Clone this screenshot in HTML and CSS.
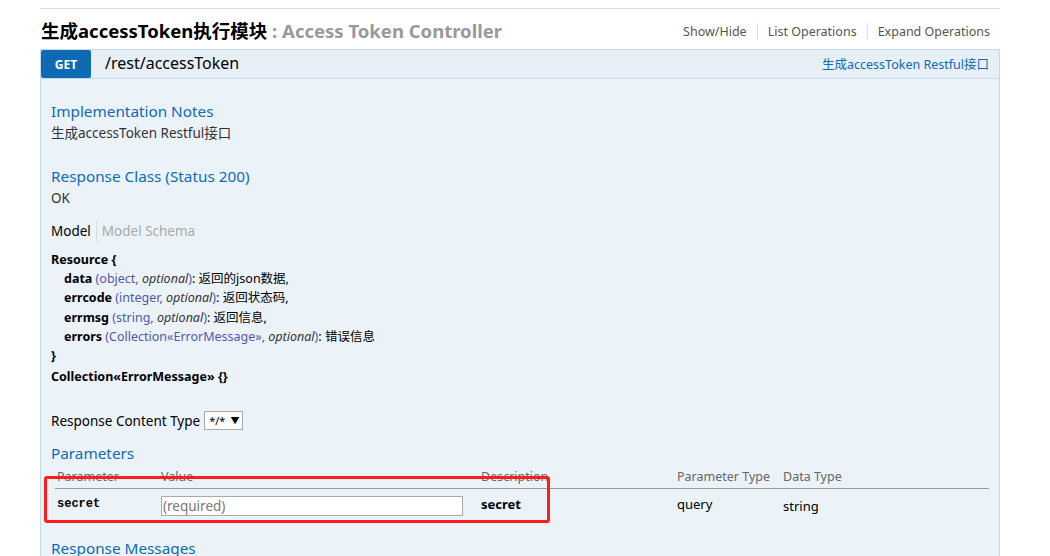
FILE: index.html
```html
<!DOCTYPE html>
<html lang="zh-CN">

<head>
    <meta charset="UTF-8">
    <meta name="viewport" content="width=device-width, initial-scale=1.0">
    <title>Access Token Controller</title>
    <link rel="stylesheet" href="styles.css">
</head>

<body>
    <div class="wrap">
        <div class="resource">
            <div class="heading">
                <h2><span class="title">生成accessToken执行模块</span> : Access Token Controller</h2>
                <ul class="options">
                    <li><a href="#">Show/Hide</a></li>
                    <li><a href="#">List Operations</a></li>
                    <li><a href="#">Expand Operations</a></li>
                </ul>
            </div>

            <div class="operation">
                <div class="op-heading">
                    <span class="method">GET</span>
                    <span class="path">/rest/accessToken</span>
                    <a class="summary" href="#">生成accessToken Restful接口</a>
                </div>

                <div class="op-content">
                    <h4>Implementation Notes</h4>
                    <p class="notes">生成accessToken Restful接口</p>

                    <h4>Response Class (Status 200)</h4>
                    <p class="notes">OK</p>

                    <ul class="signature-nav">
                        <li class="selected">Model</li>
                        <li>Model Schema</li>
                    </ul>

                    <div class="model">
                        <div class="strong">Resource {</div>
                        <div class="prop"><span class="name">data</span> <span class="type">(object, <i>optional</i>)</span>: 返回的json数据,</div>
                        <div class="prop"><span class="name">errcode</span> <span class="type">(integer, <i>optional</i>)</span>: 返回状态码,</div>
                        <div class="prop"><span class="name">errmsg</span> <span class="type">(string, <i>optional</i>)</span>: 返回信息,</div>
                        <div class="prop"><span class="name">errors</span> <span class="type">(Collection«ErrorMessage», <i>optional</i>)</span>: 错误信息</div>
                        <div class="strong">}</div>
                        <div class="strong collection">Collection«ErrorMessage» {}</div>
                    </div>

                    <div class="content-type">
                        <label>Response Content Type</label>
                        <span class="select">*/* <span class="arrow">▼</span></span>
                    </div>

                    <h4>Parameters</h4>
                    <div class="params">
                        <table>
                            <thead>
                                <tr>
                                    <th class="col-name">Parameter</th>
                                    <th class="col-value">Value</th>
                                    <th class="col-desc">Description</th>
                                    <th class="col-ptype">Parameter Type</th>
                                    <th>Data Type</th>
                                </tr>
                            </thead>
                            <tbody>
                                <tr>
                                    <td class="code">secret</td>
                                    <td><input class="param-input" type="text" placeholder="(required)"></td>
                                    <td class="strong">secret</td>
                                    <td>query</td>
                                    <td class="dtype">string</td>
                                </tr>
                            </tbody>
                        </table>
                        <div class="highlight"></div>
                    </div>

                    <h4 class="messages">Response Messages</h4>
                </div>
            </div>
        </div>
    </div>
</body>

</html>
```

FILE: styles.css
```css
/* Base */
* {
    box-sizing: border-box;
    margin: 0;
    padding: 0;
}

body {
    font-family: "Noto Sans", "Open Sans", "Noto Sans CJK SC", sans-serif;
    font-size: 13px;
    color: #333;
    background: #fff;
    overflow: hidden;
}

a {
    text-decoration: none;
}

ul {
    list-style: none;
}

.wrap {
    width: 960px;
    margin-left: 40px;
    padding-top: 8px;
}

/* Resource heading */
.heading {
    display: flex;
    align-items: center;
    justify-content: space-between;
    height: 41px;
    border-top: 1px solid #ddd;
    padding-top: 2px;
}

.heading h2 {
    font-size: 18.5px;
    font-weight: bold;
    color: #999;
    padding-left: 1px;
}

.heading h2 .title {
    color: #000;
}

.options {
    display: flex;
    padding-top: 2px;
    padding-right: 10px;
}

.options li {
    padding: 0 10px;
    border-right: 1px solid #ddd;
    line-height: 16px;
}

.options li:last-child {
    border-right: none;
    padding-right: 0;
}

.options a {
    color: #555;
    font-size: 12.5px;
}

/* Operation */
.op-heading {
    display: flex;
    align-items: center;
    height: 30px;
    background: #e7f0f7;
    border: 1px solid #c3d9ec;
}

.method {
    width: 50px;
    height: 28px;
    background: #0f6ab4;
    color: #fff;
    font-size: 12px;
    font-weight: bold;
    display: flex;
    align-items: center;
    justify-content: center;
    border-radius: 2px;
}

.path {
    font-size: 16px;
    color: #000;
    margin-left: 14px;
    margin-bottom: 2px;
    flex: 1;
}

.summary {
    color: #0f6ab4;
    font-size: 12.5px;
    padding-right: 10px;
    margin-bottom: 2px;
}

.op-content {
    background: #ebf3f9;
    border: 1px solid #c3d9ec;
    border-top: none;
    padding: 21px 10px 20px 10px;
    height: 480px;
}

.op-content h4 {
    color: #0f6ab4;
    font-size: 15.3px;
    font-weight: normal;
    line-height: 22px;
}

.notes {
    font-size: 13.5px;
    line-height: 22px;
    margin-bottom: 21px;
}

/* Model / schema */
.signature-nav {
    display: flex;
    margin-top: -10px;
    margin-bottom: 8px;
}

.signature-nav li {
    font-size: 13.5px;
    color: #aaa;
    padding: 0 5px;
    line-height: 22px;
    border-left: 1px solid #ddd;
}

.signature-nav li.selected {
    color: #000;
    padding-left: 0;
    border-left: none;
}

.model {
    font-size: 12.5px;
    color: #000;
    line-height: 19.2px;
}

.model .strong {
    font-weight: bold;
}

.prop {
    padding-left: 13px;
}

.prop .name {
    font-weight: bold;
}

.prop .type {
    color: #55a;
}

.prop .type i {
    color: #333;
}

.collection {
    margin-top: 2px;
}

.content-type {
    display: flex;
    align-items: center;
    margin-top: 25px;
    margin-bottom: 12px;
    font-size: 13.5px;
    color: #000;
}

.select {
    margin-left: 4px;
    border: 1px solid #aaa;
    background: #fff;
    height: 19px;
    width: 39px;
    font-size: 11px;
    padding-left: 4px;
    display: flex;
    align-items: center;
    gap: 5px;
}

.arrow {
    font-size: 9px;
}

/* Parameters */
.params {
    position: relative;
    margin-top: 4px;
}

.params table {
    width: 934px;
    border-collapse: collapse;
    margin-left: 4px;
}

.params th {
    text-align: left;
    font-weight: normal;
    color: #666;
    font-size: 12.5px;
    padding: 0 0 3px 2px;
    border-bottom: 1px solid #999;
}

.params td {
    padding: 6px 0 0 2px;
    vertical-align: top;
    font-size: 13px;
    color: #000;
}

.col-name {
    width: 104px;
}

.col-value {
    width: 320px;
}

.col-desc {
    width: 196px;
}

.col-ptype {
    width: 106px;
}

.params td.code {
    font-family: "Liberation Mono", monospace;
    font-weight: bold;
    font-size: 12px;
    padding-top: 8px;
}

.params td.strong {
    font-weight: bold;
}

.params td.dtype {
    padding-top: 8px;
}

.param-input {
    width: 302px;
    height: 20px;
    border: 1px solid #aaa;
    font-family: inherit;
    font-size: 13.5px;
    padding: 0 1px;
    margin-top: 1px;
}

.param-input::placeholder {
    color: #777;
}

/* annotation box drawn over the first parameter row */
.highlight {
    position: absolute;
    left: -7px;
    top: 8px;
    width: 506px;
    height: 47px;
    border: 3px solid #ff1e1e;
    border-radius: 3px;
}

.messages {
    margin-top: 21px;
}
```
